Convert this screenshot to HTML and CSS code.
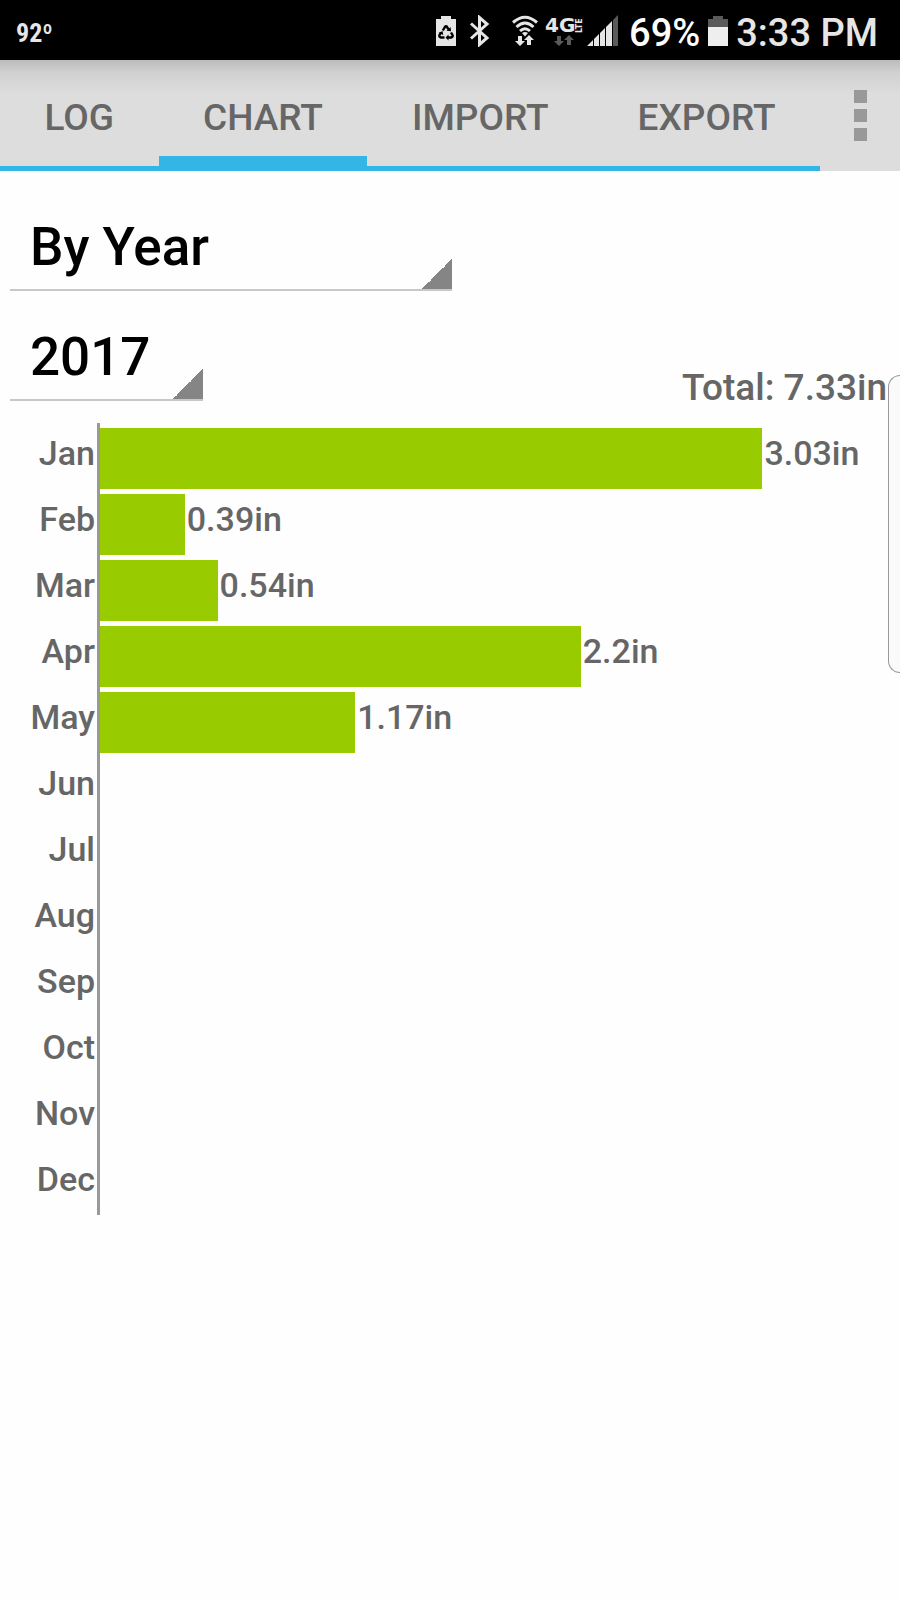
FILE: index.html
```
<!DOCTYPE html>
<html lang="en">
<head>
  <meta charset="utf-8">
  <meta name="viewport" content="width=device-width, initial-scale=1">
  <title>Rain Log</title>
  <link rel="stylesheet" href="styles.css">
</head>
<body>
  <header class="status-bar">
    <span class="temperature">92º</span>
    <div class="status-icons">
      <svg width="20" height="32" viewBox="0 0 20 32" aria-hidden="true">
        <path fill="#e6e6e6" d="M5 1h10v3h5v27H0V4h5z"/>
        <g fill="none" stroke="#000" stroke-width="2.4">
          <path d="M6.800 15.500L9 11.800q1-1.400 2 0l1.500 2.600"/>
          <path d="M15 17.500l1.600 2.700q.6 1.900-1.400 2.300H11.500"/>
          <path d="M8.500 22.500H4.800q-2-.4-1.400-2.300L5 17.500"/>
        </g>
        <path d="M10.500 15.800l4.500.4-.4-4.300zM12.500 19.500v6l-3-3zM2.500 18l4-2 .8 4z"/>
      </svg>
      <svg width="48" height="32" viewBox="0 0 48 32" aria-hidden="true">
        <path fill="none" stroke="#e6e6e6" stroke-width="3" d="M11 8.500l16 14.500-7.500 6.500V2.500L27 9 11 23.500"/>
      </svg>
      <svg width="29" height="32" viewBox="0 0 29 32" aria-hidden="true">
        <g fill="none" stroke="#e6e6e6" stroke-width="3">
          <path d="M1 7.500Q13 -3 25 7.500"/>
          <path d="M4.500 12Q13 4 21.500 12"/>
          <path d="M8 16Q13 11.500 18 16"/>
        </g>
        <path fill="#e6e6e6" d="M10 18q3-2 6 0l-3 3.500z"/>
        <path fill="#e6e6e6" d="M6 21h4v5h3l-5 5-5-5h3zM15 30v-5h-3l5-5 5 5h-3v5z"/>
      </svg>
      <svg width="38" height="40" viewBox="0 -4 38 40" aria-hidden="true">
        <text class="network" x="0" y="17">4G</text>
        <text class="network-lte" transform="translate(37 18) rotate(-90)">LTE</text>
        <path fill="#5a5a5a" d="M12 21h4v5h3l-5 5-5-5h3zM22 30v-5h-3l5-5 5 5h-3v5z"/>
      </svg>
      <svg width="38" height="32" viewBox="0 0 38 32" aria-hidden="true">
        <path fill="#e6e6e6" d="M0 31l6-6v6zM7 31v-7l5-5v12zM13 31V18l5-5v18zM19 31V12l6-6v25z"/>
        <path fill="#5a5a5a" d="M26 31V5l5-5v31z"/>
      </svg>
      <span class="status-text battery-level">69%</span>
      <svg width="28" height="32" viewBox="0 0 28 32" aria-hidden="true">
        <path fill="#5a5a5a" d="M9 1h10v3h5v9H4V4h5z"/>
        <path fill="#eee" d="M4 12h20v19H4z"/>
      </svg>
      <span class="status-text">3:33 PM</span>
    </div>
  </header>

  <div class="action-bar">
    <nav class="tabs">
      <a class="tab" href="#log">LOG</a>
      <a class="tab active" href="#chart" aria-current="page">CHART</a>
      <a class="tab" href="#import">IMPORT</a>
      <a class="tab" href="#export">EXPORT</a>
    </nav>
    <button type="button" class="menu-button" aria-label="More options">
      <span class="dot"></span>
      <span class="dot"></span>
      <span class="dot"></span>
    </button>
  </div>

  <main>
    <form class="filters">
      <select class="spinner period" aria-label="Period">
        <option selected>By Year</option>
      </select>
      <div class="filter-row">
        <select class="spinner year" aria-label="Year">
          <option selected>2017</option>
        </select>
        <output class="total">Total: 7.33in</output>
      </div>
    </form>

    <div class="chart">
      <div class="row"><span class="month">Jan</span><div class="track"><div class="bar" style="width: 82.8%"></div><span class="value">3.03in</span></div></div>
      <div class="row"><span class="month">Feb</span><div class="track"><div class="bar" style="width: 10.6%"></div><span class="value">0.39in</span></div></div>
      <div class="row"><span class="month">Mar</span><div class="track"><div class="bar" style="width: 14.7%"></div><span class="value">0.54in</span></div></div>
      <div class="row"><span class="month">Apr</span><div class="track"><div class="bar" style="width: 60.1%"></div><span class="value">2.2in</span></div></div>
      <div class="row"><span class="month">May</span><div class="track"><div class="bar" style="width: 31.9%"></div><span class="value">1.17in</span></div></div>
      <div class="row"><span class="month">Jun</span><div class="track"></div></div>
      <div class="row"><span class="month">Jul</span><div class="track"></div></div>
      <div class="row"><span class="month">Aug</span><div class="track"></div></div>
      <div class="row"><span class="month">Sep</span><div class="track"></div></div>
      <div class="row"><span class="month">Oct</span><div class="track"></div></div>
      <div class="row"><span class="month">Nov</span><div class="track"></div></div>
      <div class="row"><span class="month">Dec</span><div class="track"></div></div>
    </div>

    <div class="edge-handle"></div>
  </main>
</body>
</html>
```
FILE: styles.css
```
* {
  box-sizing: border-box;
}

body {
  margin: 0;
  min-height: 100vh;
  background-color: #fefefe;
  color: #666;
  font-family: Roboto, "Liberation Sans", sans-serif;
  font-weight: 500;
}

/* phone status bar */
.status-bar {
  display: flex;
  justify-content: space-between;
  align-items: center;
  height: 60px;
  padding: 2px 22px 0 16px;
  background-color: #000;
  color: #e6e6e6;
}

.temperature {
  padding-top: 4px;
  font-family: "Liberation Sans Narrow", "Roboto Condensed", Roboto, sans-serif;
  font-size: 26px;
  font-weight: bold;
}

.status-icons {
  display: flex;
  align-items: center;
  gap: 4px;
}

.status-text {
  padding-top: 3px;
  font-size: 38px;
  line-height: 44px;
}

.network {
  fill: #e6e6e6;
  font: bold 20px "DejaVu Sans", sans-serif;
}

.network-lte {
  fill: #e6e6e6;
  font: bold 8px "DejaVu Sans", sans-serif;
}

.battery-level {
  color: #fff;
}

/* tabs */
.action-bar {
  display: flex;
  height: 111px;
  background: linear-gradient(#bbb, #d0d0d0 12px, #ddd 34px);
}

.tabs {
  display: flex;
  flex: 1;
}

.tab {
  display: flex;
  flex: 1 1 auto;
  justify-content: center;
  align-items: center;
  padding: 4px 8px 0;
  box-shadow: inset 0 -5px #33b5e5;
  color: #666;
  font-size: 37px;
  text-decoration: none;
}

.tab.active {
  box-shadow: inset 0 -15px #33b5e5;
}

.menu-button {
  display: flex;
  flex-direction: column;
  justify-content: center;
  align-items: center;
  gap: 6px;
  width: 80px;
  padding: 0;
  border: 0;
  background: none;
}

.dot {
  width: 13px;
  height: 13px;
  background-color: #999;
}

/* period and year pickers */
main {
  position: relative;
  padding-top: 40px;
}

.filters {
  padding: 0 13px 0 10px;
}

.filter-row {
  display: flex;
  justify-content: space-between;
  align-items: flex-end;
  margin-top: 30px;
}

.spinner {
  display: block;
  height: 80px;
  padding: 0 20px 6px;
  appearance: none;
  border: 0;
  border-bottom: 2px solid #c8c8c8;
  border-radius: 0;
  background: linear-gradient(135deg, transparent 50%, #858585 50%) right bottom / 30px 30px no-repeat;
  color: #000;
  font: 500 53px Roboto, "Liberation Sans", sans-serif;
}

.period {
  width: 442px;
}

.year {
  width: 193px;
}

.total {
  font-size: 37px;
  line-height: 26px;
}

/* bar chart */
.chart {
  margin-top: 22px;
  font-size: 34px;
}

.row {
  display: flex;
  height: 66px;
  line-height: 60px;
}

.month {
  width: 97px;
  padding-right: 2px;
  text-align: right;
}

.track {
  display: flex;
  flex: 1;
  border-left: 3px solid #999;
}

.bar {
  align-self: flex-end;
  height: 61px;
  background-color: #9c0;
}

.value {
  padding-left: 2px;
}

/* edge panel handle */
.edge-handle {
  position: absolute;
  top: 204px;
  right: 0;
  width: 12px;
  height: 298px;
  border: 1px solid #999;
  border-right: 0;
  border-radius: 20px 0 0 20px;
  background-color: #fafafa;
}
```
